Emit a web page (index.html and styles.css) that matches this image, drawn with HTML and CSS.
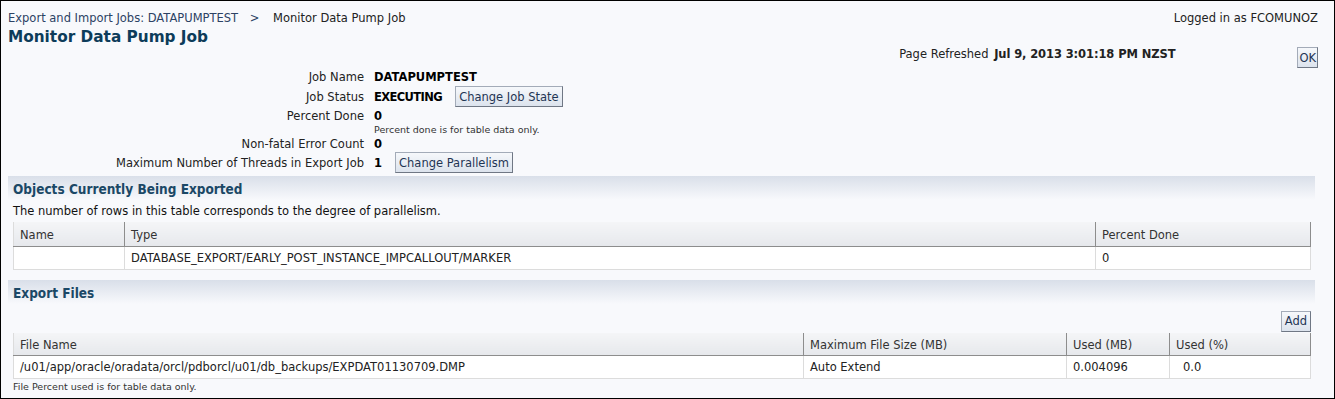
FILE: index.html
```html
<!DOCTYPE html>
<html lang="en">
<head>
  <meta charset="UTF-8" />
  <title>Monitor Data Pump Job</title>
  <link rel="stylesheet" href="styles.css">
</head>
<body>
  <div class="page">
    <div class="top-bar">
      <div class="breadcrumb">
        <a href="#">Export and Import Jobs: DATAPUMPTEST</a>
        <span class="sep">&gt;</span>
        <span>Monitor Data Pump Job</span>
      </div>
      <div class="user">Logged in as FCOMUNOZ</div>
    </div>
    <h1 class="title">Monitor Data Pump Job</h1>

    <div class="refresh-row">
      <div class="refresh">Page Refreshed <b>Jul 9, 2013 3:01:18 PM NZST</b></div>
      <button class="btn ok-btn">OK</button>
    </div>

    <div class="job-info">
      <div class="field f-name">
        <span class="label">Job Name</span>
        <span class="value"><b>DATAPUMPTEST</b></span>
      </div>
      <div class="field f-btn">
        <span class="label">Job Status</span>
        <span class="value"><b class="status">EXECUTING</b><button class="btn">Change Job State</button></span>
      </div>
      <div class="field f-short">
        <span class="label">Percent Done</span>
        <span class="value"><b>0</b></span>
      </div>
      <div class="field f-note">
        <span class="label"></span>
        <span class="value note">Percent done is for table data only.</span>
      </div>
      <div class="field f-short">
        <span class="label">Non-fatal Error Count</span>
        <span class="value"><b>0</b></span>
      </div>
      <div class="field f-btn">
        <span class="label">Maximum Number of Threads in Export Job</span>
        <span class="value"><b>1</b><button class="btn">Change Parallelism</button></span>
      </div>
    </div>

    <div class="section-head">Objects Currently Being Exported</div>
    <div class="section-desc">The number of rows in this table corresponds to the degree of parallelism.</div>
    <table class="grid objects">
      <thead>
        <tr>
          <th class="c-name">Name</th>
          <th class="c-type">Type</th>
          <th>Percent Done</th>
        </tr>
      </thead>
      <tbody>
        <tr>
          <td></td>
          <td>DATABASE_EXPORT/EARLY_POST_INSTANCE_IMPCALLOUT/MARKER</td>
          <td>0</td>
        </tr>
      </tbody>
    </table>

    <div class="section-head files-head">Export Files</div>
    <div class="table-actions">
      <button class="btn">Add</button>
    </div>
    <table class="grid files">
      <thead>
        <tr>
          <th class="c-file">File Name</th>
          <th class="c-max">Maximum File Size (MB)</th>
          <th class="c-used">Used (MB)</th>
          <th>Used (%)</th>
        </tr>
      </thead>
      <tbody>
        <tr>
          <td>/u01/app/oracle/oradata/orcl/pdborcl/u01/db_backups/EXPDAT01130709.DMP</td>
          <td>Auto Extend</td>
          <td>0.004096</td>
          <td class="pct">0.0</td>
        </tr>
      </tbody>
    </table>
    <div class="foot-note">File Percent used is for table data only.</div>
  </div>
</body>
</html>
```

FILE: styles.css
```css
:root {
  --bg: #f8f9fc;
  --link: #2c4264;
  --title: #0d3c5a;
  --section: #1b4866;
  --grid-line: #dcdcdc;
  --head-line: #8d8d8d;
}

* {
  box-sizing: border-box;
}

body {
  margin: 0;
  padding: 0;
  font-family: 'DejaVu Sans', Verdana, sans-serif;
  font-size: 11.5px;
  color: #222;
}

.page {
  width: 1335px;
  height: 399px;
  border: 1px solid #000;
  background: var(--bg);
  padding: 8px 16px 0 7px;
  overflow: hidden;
}

.top-bar {
  display: flex;
  justify-content: space-between;
  line-height: 18px;
}

.breadcrumb a {
  color: var(--link);
  text-decoration: none;
}

.breadcrumb .sep {
  color: var(--link);
  margin: 0 10px 0 8px;
}

.user {
  color: #222;
}

.title {
  margin: 0;
  font-size: 15.3px;
  line-height: 20px;
  color: var(--title);
  font-weight: bold;
}

.refresh-row {
  display: flex;
  justify-content: flex-end;
  align-items: flex-start;
  height: 20px;
}

.refresh {
  line-height: 18px;
  margin-top: -2px;
}

.refresh b {
  margin-left: 2px;
  letter-spacing: -0.1px;
}

.btn {
  font-family: inherit;
  font-size: 11.5px;
  color: #1f3554;
  height: 21px;
  padding: 0 3px;
  border: 1px solid #a3abb8;
  border-right-color: #6f7784;
  border-bottom-color: #6f7784;
  background: linear-gradient(#f6f8fb, #dce3ed);
  cursor: pointer;
}

.refresh-row .ok-btn {
  margin-left: 122px;
  padding: 0 1px;
}

.job-info {
  display: flex;
  flex-direction: column;
}

.field {
  display: grid;
  grid-template-columns: 356px 1fr;
  column-gap: 10px;
  align-items: center;
}

.f-name { height: 19px; }
.f-btn { height: 21px; }
.f-short { height: 17px; }
.f-note { height: 11px; }

.label {
  text-align: right;
}

.value {
  display: flex;
  align-items: center;
  gap: 13px;
  color: #000;
}

.status {
  letter-spacing: -0.6px;
}

.note {
  font-size: 9.5px;
  color: #333;
}

.section-head {
  margin: 3px 3px 0 0;
  height: 24px;
  padding: 5px 0 0 5px;
  font-family: 'DejaVu Sans Condensed', 'DejaVu Sans', sans-serif;
  font-size: 13.5px;
  font-weight: bold;
  color: var(--section);
  background: linear-gradient(#d9dfe9, var(--bg));
}

.section-desc {
  padding-left: 5px;
  line-height: 22px;
  color: #111;
}

.grid {
  margin-left: 5px;
  width: 1298px;
  border-collapse: collapse;
  background: #fff;
}

.grid th {
  height: 24px;
  padding: 2px 6px 0;
  text-align: left;
  font-weight: normal;
  color: #333;
  background: linear-gradient(#f4f5f7, #e6e8ec);
  border-bottom: 1px solid var(--head-line);
  border-left: 1px solid var(--head-line);
}

.grid th:first-child {
  border-left: 1px solid var(--grid-line);
}

.grid th:last-child {
  border-right: 1px solid var(--head-line);
}

.grid td {
  height: 23px;
  padding: 0 6px;
  border: 1px solid var(--grid-line);
  color: #222;
}

.c-name { width: 111px; }
.c-type { width: 971px; }

.files th {
  height: 23px;
}

.c-file { width: 790px; }
.c-max { width: 263px; }
.c-used { width: 103px; }

.grid .pct {
  padding-left: 13px;
}

.files-head {
  margin-top: 10px;
}

.table-actions {
  display: flex;
  justify-content: flex-end;
  width: 1303px;
  padding-top: 7px;
  height: 29px;
}

.foot-note {
  padding-left: 5px;
  font-size: 9.5px;
  line-height: 16px;
  color: #333;
}
```
